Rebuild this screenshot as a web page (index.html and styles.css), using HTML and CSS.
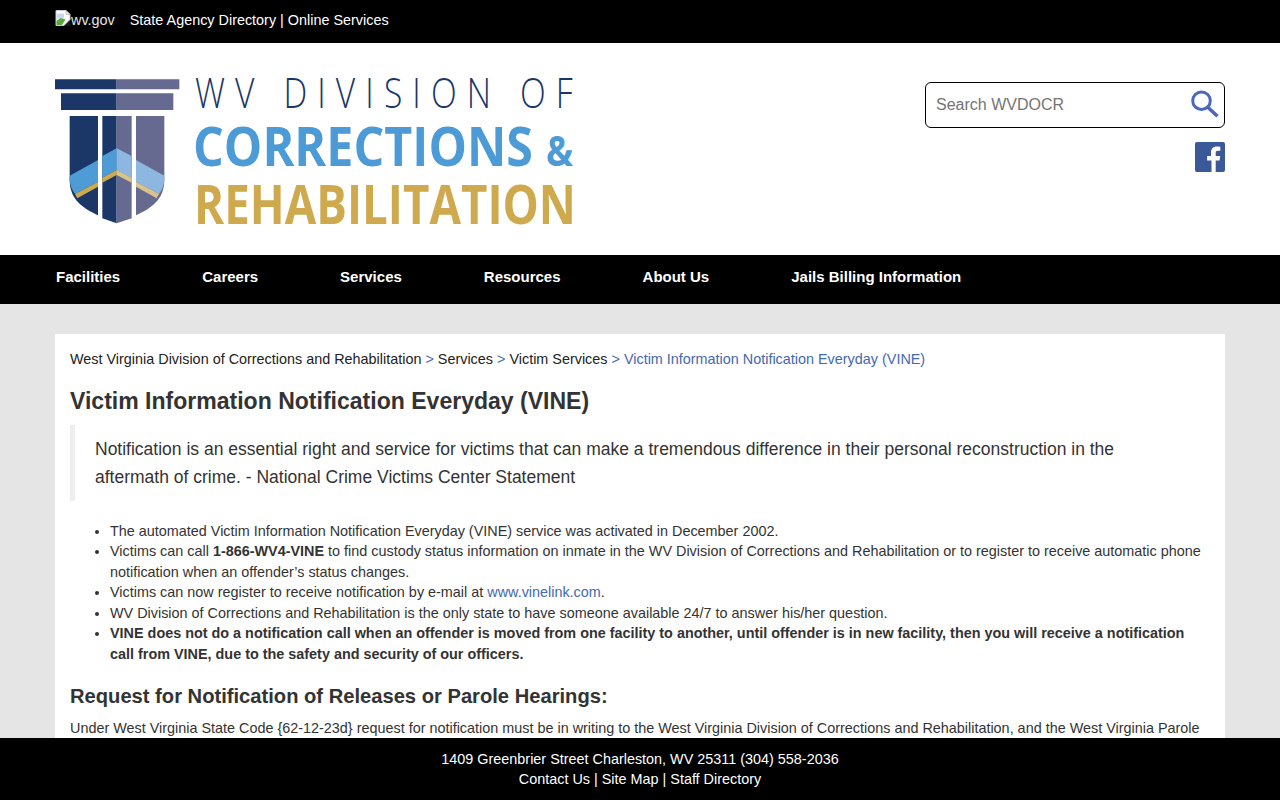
FILE: index.html
```html
<!DOCTYPE html>
<html lang="en">
<head>
<meta charset="utf-8">
<title>Victim Information Notification Everyday (VINE)</title>
<link rel="stylesheet" href="styles.css">
</head>
<body>
<div class="topbar">
  <a class="wvgov" href="#"><svg class="broken" width="16" height="16" viewBox="0 0 16 16"><path d="M1 .5h10l4 4v5L9 15.500H1z" fill="#fff" stroke="#c4c8cc"/><path d="M11 .5v4h4z" fill="#dfe3e8" stroke="#b5b9be" stroke-width=".6"/><path d="M2 3.500h7v5H2z" fill="#c5d8f5"/><path d="M1.500 11l4-3 5 1.500L7 15H1.500z" fill="#5aa83f"/><path d="M10 15.700L15.500 10v5.700z" fill="#1b1b1b"/></svg><span class="alt">wv.gov</span></a>
  <a class="toplink" href="#">State Agency Directory</a><span class="sep"> | </span><a class="toplink" href="#">Online Services</a>
</div>
<header class="masthead">
  <svg class="logo" width="520" height="152" viewBox="0 0 520 152" role="img" aria-label="WV Division of Corrections and Rehabilitation">
    <g transform="translate(-5 -6) scale(.33333)">
      <path d="M15 28H200V58H15zM33 70H200V120H33z" fill="#1a3767"/>
      <path d="M200 28H388V58H200zM200 70H370V120H200z" fill="#666a90"/>
      <path d="M59 138H144V436C100 415 59 390 59 330Z" fill="#1a3767"/>
      <path d="M258 138H343V330C343 390 302 415 258 436Z" fill="#666a90"/>
      <path d="M157 138H200V460L157 445Z" fill="#1a3767"/>
      <path d="M200 138H245V445L200 460Z" fill="#666a90"/>
      <path d="M59 317L144 270V335L75 372C66 360 60 345 59 330Z" fill="#4d9cd6"/>
      <path d="M157 258L200 235V300L157 323Z" fill="#4d9cd6"/>
      <path d="M200 235L245 258V323L200 300Z" fill="#8db6e0"/>
      <path d="M258 270L343 317V330C342 345 336 360 327 372L258 335Z" fill="#8db6e0"/>
      <path d="M75 372L144 335V350L82 385ZM157 323L200 300V315L157 338Z" fill="#cfa94d"/>
      <path d="M200 300L245 323V338L200 315ZM258 335L327 372L320 385L258 350Z" fill="#d8c48a"/>
    </g>
    <text class="logo-l1" transform="translate(140 32) scale(.8 1)" x="0" y="0" textLength="472" lengthAdjust="spacing">WV DIVISION OF</text>
    <text class="logo-l2" x="138" y="90" textLength="340" lengthAdjust="spacingAndGlyphs">CORRECTIONS</text>
    <text class="logo-amp" x="491" y="90" textLength="27" lengthAdjust="spacingAndGlyphs">&amp;</text>
    <text class="logo-l3" x="139" y="148" textLength="382" lengthAdjust="spacingAndGlyphs">REHABILITATION</text>
  </svg>
  <div class="tools">
    <form class="search">
      <input class="search-input" type="text" placeholder="Search WVDOCR" aria-label="Search WVDOCR">
      <svg class="search-icon" width="30" height="30" viewBox="0 0 30 30"><circle cx="12.500" cy="10.700" r="8.800" fill="none" stroke="#4a69bd" stroke-width="3"/><path d="M18.500 17L28.500 26.300" stroke="#4a69bd" stroke-width="3.500" fill="none"/></svg>
    </form>
    <a class="fb" href="#" aria-label="Facebook"><svg width="30" height="30" viewBox="0 0 30 30"><rect width="30" height="30" rx="2" fill="#3b5998"/><path d="M20.700 30V18.400h3.900l.6-4.500h-4.500v-2.900c0-1.300.4-2.200 2.200-2.200h2.400v-4c-.4 0-1.800-.2-3.500-.2-3.400 0-5.800 2.100-5.800 6v3.300h-3.900v4.500H16.500V30z" fill="#fff"/></svg></a>
  </div>
</header>
<nav class="mainnav">
  <a href="#">Facilities</a>
  <a href="#">Careers</a>
  <a href="#">Services</a>
  <a href="#">Resources</a>
  <a href="#">About Us</a>
  <a href="#">Jails Billing Information</a>
</nav>
<main class="page">
  <article class="card">
    <p class="crumbs"><a href="#">West Virginia Division of Corrections and Rehabilitation</a> <span class="gt">&gt;</span> <a href="#">Services</a> <span class="gt">&gt;</span> <a href="#">Victim Services</a> <span class="gt">&gt; Victim Information Notification Everyday (VINE)</span></p>
    <h1>Victim Information Notification Everyday (VINE)</h1>
    <blockquote>Notification is an essential right and service for victims that can make a tremendous difference in their personal reconstruction in the aftermath of crime. - National Crime Victims Center Statement</blockquote>
    <ul>
      <li>The automated Victim Information Notification Everyday (VINE) service was activated in December 2002.</li>
      <li>Victims can call <strong>1-866-WV4-VINE</strong> to find custody status information on inmate in the WV Division of Corrections and Rehabilitation or to register to receive automatic phone notification when an offender’s status changes.</li>
      <li>Victims can now register to receive notification by e-mail at <a class="link" href="#">www.vinelink.com</a>.</li>
      <li>WV Division of Corrections and Rehabilitation is the only state to have someone available 24/7 to answer his/her question.</li>
      <li><strong>VINE does not do a notification call when an offender is moved from one facility to another, until offender is in new facility, then you will receive a notification call from VINE, due to the safety and security of our officers.</strong></li>
    </ul>
    <h2>Request for Notification of Releases or Parole Hearings:</h2>
    <p class="body">Under West Virginia State Code {62-12-23d} request for notification must be in writing to the West Virginia Division of Corrections and Rehabilitation, and the West Virginia Parole Board.</p>
  </article>
</main>
<footer class="foot">
  <div>1409 Greenbrier Street Charleston, WV 25311 (304) 558-2036</div>
  <div><a href="#">Contact Us</a> | <a href="#">Site Map</a> | <a href="#">Staff Directory</a></div>
</footer>
</body>
</html>
```
FILE: styles.css
```css
* { box-sizing: border-box; }
html, body { margin: 0; padding: 0; }
body {
  height: 800px;
  overflow: hidden;
  background: #e5e5e5;
  color: #333;
  font-family: "Liberation Sans", Arial, sans-serif;
  font-size: 14.4px;
}
a { color: inherit; text-decoration: none; }

.topbar {
  height: 43px;
  background: #000;
  color: #fff;
  display: flex;
  align-items: center;
  padding: 0 0 3px 55px;
  font-size: 14.4px;
  white-space: pre;
}
.wvgov { display: flex; align-items: center; margin-right: 15px; color: #e6e6e6; }
.broken { display: block; margin-top: -5px; }

.masthead {
  height: 212px;
  background: #fff;
  padding: 33px 55px 0;
  display: flex;
  justify-content: space-between;
  align-items: flex-start;
}
.logo { display: block; overflow: visible; }
.logo-l1 { font-family: "Open Sans", sans-serif; font-weight: 300; font-size: 42px; fill: #1a3767; }
.logo-l2 { font-family: "Open Sans", sans-serif; font-weight: 700; font-size: 54.5px; fill: #4c9bd6; }
.logo-amp { font-family: "Open Sans", sans-serif; font-weight: 700; font-size: 42px; fill: #4c9bd6; }
.logo-l3 { font-family: "Open Sans", sans-serif; font-weight: 700; font-size: 54.5px; fill: #cfa94d; }

.tools { width: 300px; padding-top: 6px; display: flex; flex-direction: column; align-items: flex-end; gap: 14px; }
.search {
  width: 300px;
  height: 46px;
  border: 1px solid #000;
  border-radius: 6px;
  background: #fff;
  display: flex;
  align-items: center;
  justify-content: space-between;
  padding: 0 5px 0 10px;
}
.search-input {
  border: 0;
  outline: 0;
  padding: 0;
  flex: 1;
  min-width: 0;
  font: 16px "Liberation Sans", Arial, sans-serif;
  color: #333;
}
.search-input::placeholder { color: #757575; opacity: 1; }
.fb { display: block; height: 30px; }
.fb svg { display: block; }

.mainnav {
  height: 49px;
  background: #000;
  display: flex;
  align-items: center;
  padding: 0 0 6px 56px;
  gap: 82px;
  color: #fff;
  font-weight: 700;
  font-size: 15px;
}

.page { padding: 30px 55px 0; }
.card {
  background: #fff;
  padding: 15px;
  height: 500px;
}
.crumbs { margin: 0; font-size: 14.4px; line-height: 20px; color: #222; }
.gt { color: #4468b4; }
h1 { margin: 18px 0 10px; font-size: 23.04px; line-height: 28px; font-weight: 700; color: #333; }
blockquote {
  margin: 0 0 19.58px;
  padding: 10px 20px;
  border-left: 5px solid #eee;
  font-size: 17.5px;
  line-height: 28px;
  color: #333;
}
ul { margin: 0 0 19.5px; padding-left: 40px; line-height: 20.57px; }
.link { color: #4468b4; }
strong { font-weight: 700; }
h2 { margin: 0 0 10px; font-size: 20.16px; line-height: 24px; font-weight: 700; color: #333; }
.body { margin: 0; line-height: 20.57px; }

.foot {
  position: fixed;
  left: 0;
  right: 0;
  bottom: 0;
  height: 62px;
  background: #000;
  color: #fff;
  text-align: center;
  font-size: 14.4px;
  line-height: 20px;
  padding-top: 11px;
}
```
